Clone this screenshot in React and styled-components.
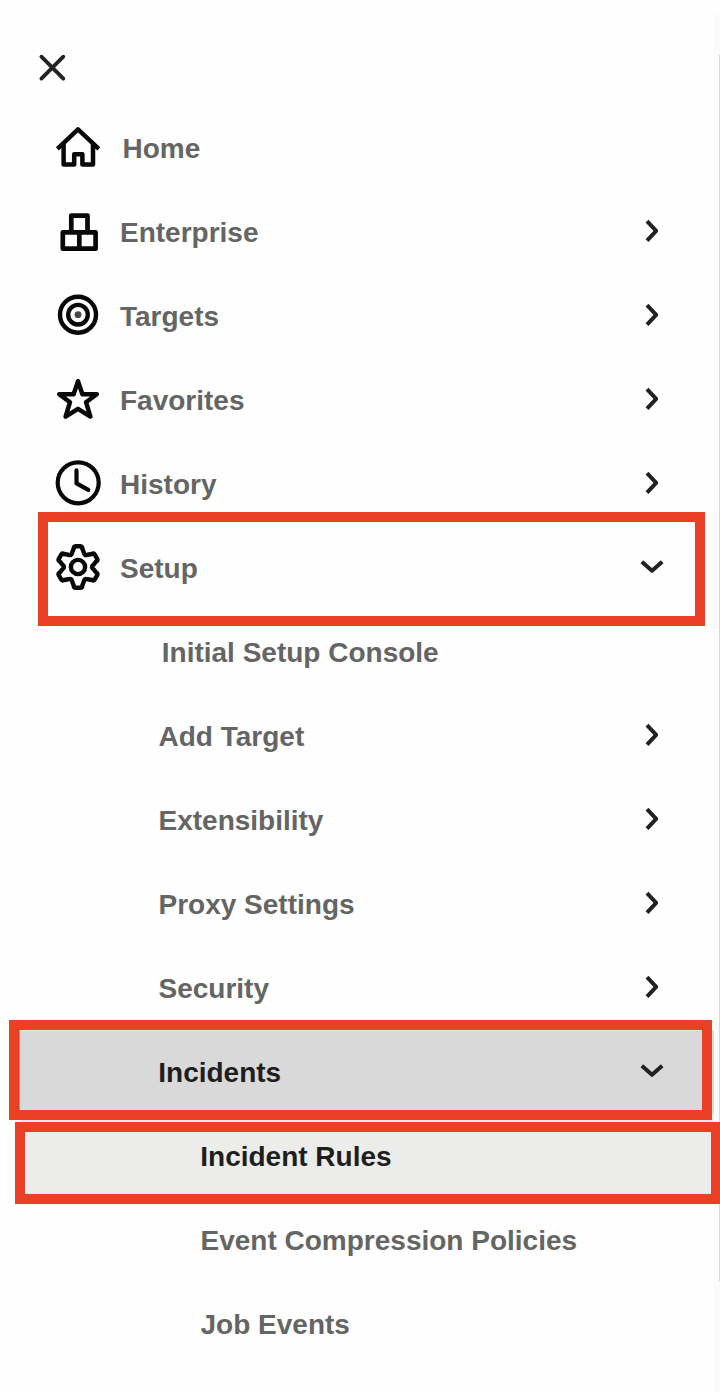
import React from "react";
import styled, { createGlobalStyle, css } from "styled-components";

const GlobalStyle = createGlobalStyle`
  *, *::before, *::after { box-sizing: border-box; }
  html, body { margin: 0; padding: 0; background: #fefefe; }
  body { font-family: "Liberation Sans", Arial, Helvetica, sans-serif; overflow: hidden; }
`;

const Page = styled.div`
  display: flex;
  width: 720px;
  height: 1392px;
  overflow: hidden;
  background: #fefefe;
`;

const Drawer = styled.nav`
  flex: 0 0 714px;
  display: flex;
  flex-direction: column;
`;

const Gutter = styled.div`
  flex: 1;
  margin: 14px 0 0;
  padding: 41px 0 111px;
  background: #fbfbfb;
  display: flex;
  justify-content: flex-end;
`;

const GutterLine = styled.div`
  width: 1px;
  background: #d9d9d9;
`;

const Header = styled.header`
  height: 106px;
  padding: 52px 0 0 36px;
`;

const CloseButton = styled.button`
  display: block;
  width: 32px;
  height: 32px;
  padding: 0;
  border: 0;
  background: none;
  svg { display: block; }
`;

const List = styled.ul`
  margin: 0;
  padding: 0;
  list-style: none;
`;

const tones = {
  open: css`
    margin-left: 19px;
    background: #d9d9d9;
    color: #1e1e1e;
    box-shadow: inset 1px 0 #76a0b4, inset 0 1px #e6e6e6;
  `,
  current: css`
    margin-left: 20px;
    background: #ececea;
    color: #1e1e1e;
  `,
};

const Row = styled.li`
  position: relative;
  display: flex;
  align-items: center;
  height: 84px;
  padding-right: 48px;
  color: #656563;
  ${({ $tone }) => tones[$tone]}
`;

const IconSlot = styled.span`
  flex: none;
  width: 48px;
  height: 48px;
  margin-left: 54px;
  svg { display: block; }
`;

const Label = styled.span`
  flex: 1;
  margin-left: ${({ $indent }) => $indent}px;
  padding-top: 2px;
  font-size: 28px;
  font-weight: 700;
  line-height: 32px;
  white-space: nowrap;
`;

const Highlight = styled.span`
  position: absolute;
  z-index: 1;
  left: ${({ $box }) => $box.left}px;
  top: ${({ $box }) => $box.top}px;
  width: ${({ $box }) => $box.width}px;
  height: ${({ $box }) => $box.height}px;
  border: 10px solid #ea4025;
  pointer-events: none;
`;

const Glyph = ({ children, size = 48, width = 4.5, color = "#080808" }) => (
  <svg
    width={size}
    height={size}
    viewBox={`0 0 ${size} ${size}`}
    fill="none"
    stroke={color}
    strokeWidth={width}
    strokeLinecap="round"
    strokeLinejoin="round"
    aria-hidden="true"
  >
    {children}
  </svg>
);

const polar = (deg, r) => {
  const a = (deg * Math.PI) / 180;
  return `${(24 + r * Math.sin(a)).toFixed(2)} ${(23 - r * Math.cos(a)).toFixed(2)}`;
};

// Six teeth, each joined to the next by a rounded valley.
const gearPath =
  [0, 60, 120, 180, 240, 300]
    .map(
      (t, i) =>
        `${i ? "L" : "M"}${polar(t - 13, 19)}Q${polar(t - 12, 20.9)} ${polar(t - 8, 20.9)}` +
        `L${polar(t + 8, 20.9)}Q${polar(t + 12, 20.9)} ${polar(t + 13, 19)}` +
        `L${polar(t + 22, 15.6)}Q${polar(t + 30, 12.6)} ${polar(t + 38, 15.6)}`
    )
    .join("") + "Z";

const icons = {
  home: (
    <Glyph>
      <path d="M3.4 24.9 24 5.4 44.8 24.9" strokeLinecap="butt" />
      <path d="M9.6 20.5V40.6H20.2V30.2h8.2V40.6h10.6V20.5" />
    </Glyph>
  ),
  enterprise: (
    <Glyph width={4.7}>
      <path d="M17.3 24V7.6h16.2v17M8.8 24.4H41.6v16.3H8.8zM25.3 24.4v16.3" />
    </Glyph>
  ),
  targets: (
    <Glyph width={4.4}>
      <circle cx="24" cy="22.7" r="18" />
      <circle cx="24" cy="22.7" r="9.8" />
      <circle cx="24" cy="22.7" r="3.4" fill="#484848" stroke="none" />
    </Glyph>
  ),
  favorites: (
    <Glyph>
      <path d="M24 5.2 28.4 18.2H42.8L32 26.2 36.4 40.6 24 32.8 11.6 40.6 16 26.2 5.2 18.2H19.6Z" />
    </Glyph>
  ),
  history: (
    <Glyph width={4.2}>
      <circle cx="24.2" cy="22.8" r="20.5" />
      <path d="M22.5 10.4V23.4L34.3 29.9" />
    </Glyph>
  ),
  setup: (
    <Glyph width={4.4}>
      <path d={gearPath} />
      <circle cx="24" cy="23" r="7.1" />
    </Glyph>
  ),
};

const Chevron = ({ down }) => (
  <Glyph size={28} width={4} color="#222">
    <path
      d={down ? "M3.8 7.8 14 16.8 24.2 7.8" : "M9 3.2 18.2 12.9 9 22.6"}
      strokeLinecap="butt"
      strokeLinejoin="round"
    />
  </Glyph>
);

const items = [
  { label: "Home", icon: "home", indent: 20.5 },
  { label: "Enterprise", icon: "enterprise", indent: 18, arrow: "right" },
  { label: "Targets", icon: "targets", indent: 18, arrow: "right" },
  { label: "Favorites", icon: "favorites", indent: 18, arrow: "right" },
  { label: "History", icon: "history", indent: 18, arrow: "right" },
  {
    label: "Setup", icon: "setup", indent: 18, arrow: "down",
    box: { left: 38, top: -14, width: 667, height: 114 },
  },
  { label: "Initial Setup Console", indent: 161.75 },
  { label: "Add Target", indent: 158.5, arrow: "right" },
  { label: "Extensibility", indent: 158.5, arrow: "right" },
  { label: "Proxy Settings", indent: 158.5, arrow: "right" },
  { label: "Security", indent: 158.5, arrow: "right" },
  {
    label: "Incidents", indent: 139.25, arrow: "down", tone: "open",
    box: { left: -10, top: -10, width: 703, height: 100 },
  },
  {
    label: "Incident Rules", indent: 180.25, tone: "current",
    box: { left: -5, top: 8, width: 706, height: 82 },
  },
  { label: "Event Compression Policies", indent: 200.5 },
  { label: "Job Events", indent: 200.5 },
];

export default function App() {
  return (
    <>
      <GlobalStyle />
      <Page>
        <Drawer>
          <Header>
            <CloseButton aria-label="Close">
              <Glyph size={32} width={3.8} color="#222">
                <path d="M5.4 4.7 27.3 26.6M27.3 4.7 5.4 26.6" />
              </Glyph>
            </CloseButton>
          </Header>
          <List>
            {items.map(({ label, icon, indent, arrow, tone, box }) => (
              <Row key={label} $tone={tone}>
                {icon && <IconSlot>{icons[icon]}</IconSlot>}
                <Label $indent={indent}>{label}</Label>
                {arrow && <Chevron down={arrow === "down"} />}
                {box && <Highlight $box={box} />}
              </Row>
            ))}
          </List>
        </Drawer>
        <Gutter>
          <GutterLine />
        </Gutter>
      </Page>
    </>
  );
}
